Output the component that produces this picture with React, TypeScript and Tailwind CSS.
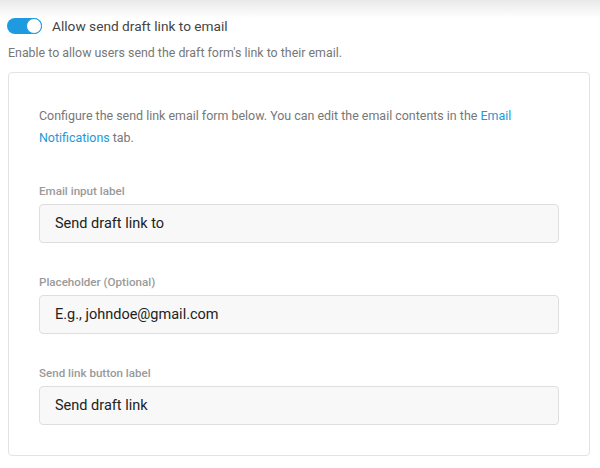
export default function App() {
  const fields = [
    { label: "Email input label", value: "Send draft link to" },
    { label: "Placeholder (Optional)", value: "E.g., johndoe@gmail.com" },
    { label: "Send link button label", value: "Send draft link" },
  ];

  return (
    <div className="relative h-[468px] w-[600px] overflow-hidden bg-white font-['Roboto',sans-serif]">
      {/* top shadow from the panel above */}
      <div className="absolute inset-x-0 top-0 h-[18px] bg-gradient-to-b from-[#e9e9e9] to-white" />

      <div className="relative px-2 pt-[17px]">
        <div className="flex items-center">
          <span className="ml-[-1px] flex h-[16px] w-[35px] items-center justify-end rounded-full bg-[#1e9be0]">
            <span className="h-[16px] w-[16px] rounded-full border border-[#1e9be0] bg-white" />
          </span>
          <span className="ml-[10px] text-[13.7px] leading-[18px] text-[#444]">Allow send draft link to email</span>
        </div>
        <p className="mt-[10px] text-[12.4px] leading-[16px] text-[#777]">
          Enable to allow users send the draft form's link to their email.
        </p>

        <div className="mt-[11px] w-[582px] rounded border border-[#e3e3e3] px-[30px] pt-[32px] pb-[30px]">
          <p className="text-[12.45px] leading-[22px] text-[#777]">
            Configure the send link email form below. You can edit the email contents in the{" "}
            <span className="text-[#1b9ad8]">Email</span>{" "}
            <span className="text-[#1b9ad8]">Notifications</span> tab.
          </p>

          <div className="mt-[34px] flex flex-col gap-[31px]">
            {fields.map((f) => (
              <div key={f.label}>
                <div className="text-[11.6px] font-medium leading-[16px] text-[#9a9a9a]">{f.label}</div>
                <div className="mt-[5px] flex h-[39px] items-center rounded border border-[#dedede] bg-[#f8f8f8] px-[15px] text-[14.5px] text-[#222]">
                  {f.value}
                </div>
              </div>
            ))}
          </div>
        </div>
      </div>
    </div>
  );
}
